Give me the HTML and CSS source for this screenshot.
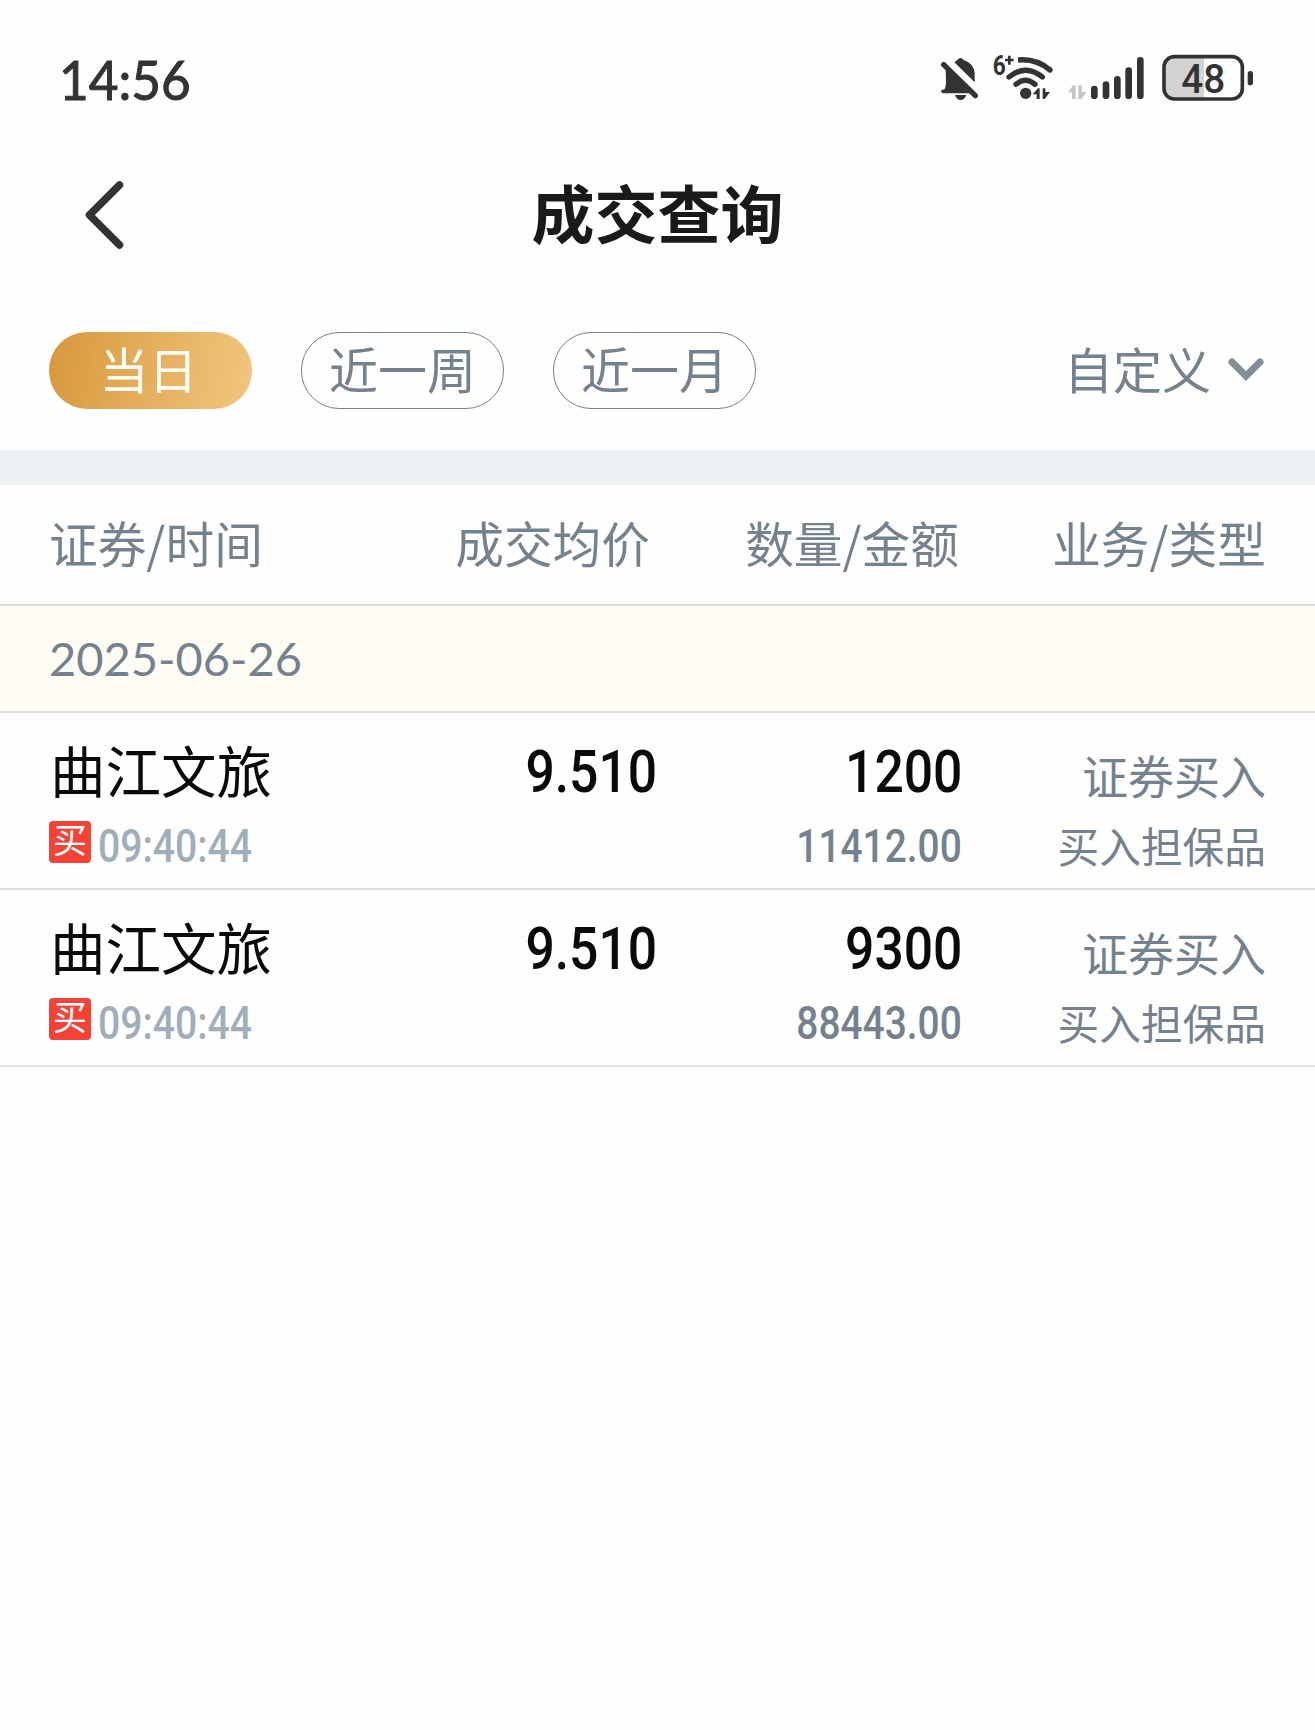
FILE: index.html
```html
<!DOCTYPE html>
<html lang="zh-CN">
<head>
  <meta charset="UTF-8">
  <title>成交查询</title>
  <link rel="stylesheet" href="styles.css">
</head>
<body>
  <div class="status-bar">
    <span class="clock">14:56</span>
    <svg class="status-icons" viewBox="0 0 1080 240" width="360" height="80">
      <!-- muted bell -->
      <g fill="#333">
        <path d="M77 78 L148 149 V154 H71 Q78 142 78 130 Z"/>
        <path d="M103 67 Q108 63 112 60 Q121 48 131 60 Q162 70 164 100 V127 Z"/>
        <path d="M105 165 H139 Q134 180 122 180 Q110 180 105 165 Z"/>
        <path d="M71 74 L166 167" fill="none" stroke="#333" stroke-width="16" stroke-linecap="round"/>
        <path d="M69 154 H150" fill="none" stroke="#333" stroke-width="11" stroke-linecap="round"/>
      </g>
      <!-- wifi -->
      <text class="wifi-gen" x="218" y="106" font-size="84" textLength="39" lengthAdjust="spacingAndGlyphs">6</text>
      <path d="M255 60 H281 M268 47 V74" fill="none" stroke="#333" stroke-width="8"/>
      <g fill="none" stroke="#333" stroke-width="16" stroke-linecap="round">
        <path d="M294 60 Q349 55 390 90" stroke-linecap="butt"/>
        <path d="M389 89 L390 90"/>
        <path d="M267 111 Q317 70 367 111"/>
        <path d="M288 133 Q316 109 345 133"/>
      </g>
      <circle cx="317" cy="160" r="17" fill="#333"/>
      <path d="M338 163 L354 145 H359 V177 H350 V163 Z M368 145 H376 V156 H390 L374 177 H368 Z" fill="#333"/>
      <!-- signal -->
      <path d="M445 157 L459 136 H467 V177 H456 V157 Z M475 136 H485 V157 H499 L484 177 H475 Z" fill="#c4c4c4"/>
      <path d="M523 147 V167 M558 134 V167 M592 118 V167 M626 92 V167 M661 61 V167" stroke="#333" stroke-width="20" stroke-linecap="round"/>
      <!-- battery -->
      <path d="M852 50 V177 H765 Q732 177 732 144 V83 Q732 50 765 50 Z" fill="#d3d3d3"/>
      <rect x="732" y="50" width="235" height="127" rx="31" fill="none" stroke="#333" stroke-width="11"/>
      <rect x="983" y="93" width="16" height="43" rx="8" fill="#333"/>
      <text class="battery-level" x="784" y="159" font-size="121" textLength="132" lengthAdjust="spacingAndGlyphs">48</text>
    </svg>
  </div>

  <div class="nav">
    <svg class="back" viewBox="0 0 40 70" width="40" height="70">
      <path d="M35.5 5 L5.5 35 L35.5 65" fill="none" stroke="#333" stroke-width="7.5" stroke-linecap="round" stroke-linejoin="round"/>
    </svg>
    <h1>成交查询</h1>
  </div>

  <div class="filters">
    <button class="pill active">当日</button>
    <button class="pill">近一周</button>
    <button class="pill">近一月</button>
    <div class="custom">
      <span>自定义</span>
      <svg viewBox="0 0 36 24" width="36" height="24">
        <path d="M4 5 L18 19 L32 5" fill="none" stroke="#828d9a" stroke-width="7" stroke-linecap="round" stroke-linejoin="miter"/>
      </svg>
    </div>
  </div>

  <div class="divider"></div>

  <div class="table-head">
    <span>证券/时间</span>
    <span>成交均价</span>
    <span>数量/金额</span>
    <span>业务/类型</span>
  </div>

  <div class="date"><span>2025-06-26</span></div>

  <div class="row">
    <div class="cell stock">
      <div class="name">曲江文旅</div>
      <div class="time"><i class="tag">买</i><span class="num">09:40:44</span></div>
    </div>
    <div class="cell price"><span class="num big">9.510</span></div>
    <div class="cell amount">
      <span class="num big">1200</span>
      <span class="num small">11412.00</span>
    </div>
    <div class="cell type">
      <div class="business">证券买入</div>
      <div class="kind">买入担保品</div>
    </div>
  </div>

  <div class="row">
    <div class="cell stock">
      <div class="name">曲江文旅</div>
      <div class="time"><i class="tag">买</i><span class="num">09:40:44</span></div>
    </div>
    <div class="cell price"><span class="num big">9.510</span></div>
    <div class="cell amount">
      <span class="num big">9300</span>
      <span class="num small">88443.00</span>
    </div>
    <div class="cell type">
      <div class="business">证券买入</div>
      <div class="kind">买入担保品</div>
    </div>
  </div>
</body>
</html>
```
FILE: styles.css
```css
* {
  box-sizing: border-box;
}
body {
  margin: 0;
  background-color: #fefefe;
  color: #74818f;
  font-family: "Noto Sans CJK SC", sans-serif;
}
.status-bar {
  display: flex;
  align-items: center;
  justify-content: space-between;
  height: 160px;
  padding: 0 35px 0 59px;
}
.clock {
  font-family: Lato, sans-serif;
  font-size: 54px;
  line-height: 60px;
  color: #333;
  -webkit-text-stroke: 1px #333;
  transform: scaleX(0.95);
  transform-origin: left;
}
.wifi-gen, .battery-level {
  font-family: Roboto, sans-serif;
  font-weight: 500;
  fill: #333;
}
.wifi-gen {
  font-weight: 700;
}
.nav {
  display: grid;
  grid-template-columns: 1fr auto 1fr;
  align-items: center;
  height: 106px;
  padding: 0 84px;
}
.back {
  margin-top: 3px;
}
h1 {
  margin: 0;
  padding-bottom: 4px;
  font-size: 63px;
  font-weight: 700;
  line-height: 90px;
  color: #1a1a1a;
}
.filters {
  display: flex;
  align-items: center;
  gap: 49px;
  height: 184px;
  padding: 25px 50px 0 49px;
}
.pill {
  width: 203px;
  height: 77px;
  padding: 0 0 5px;
  border: 1px solid #74818f;
  border-radius: 38px;
  background: none;
  font-family: inherit;
  font-size: 49px;
  line-height: 70px;
  color: #74818f;
}
.pill.active {
  padding-right: 4px;
  border: none;
  background: linear-gradient(100deg, #d8983b, #f1c67f);
  color: #fffdf5;
}
.custom {
  display: flex;
  align-items: center;
  gap: 17px;
  margin-left: auto;
  padding: 0 1px 5px 0;
  font-size: 49px;
  line-height: 70px;
}
.custom svg {
  margin-top: 2px;
}
.divider {
  height: 35px;
  background-color: #edf1f4;
}
.table-head, .row {
  display: grid;
  grid-template-columns: 1fr 300px 309px 307px;
  padding: 0 49px;
  border-bottom: 2px solid #dedede;
}
.table-head {
  height: 121px;
  font-size: 48.7px;
  line-height: 114px;
  text-align: right;
}
.table-head span:first-child {
  text-align: left;
}
.date {
  height: 107px;
  padding-left: 49px;
  border-bottom: 2px solid #dedede;
  background-color: #fffcf4;
  font-family: Lato, sans-serif;
  font-size: 47px;
  line-height: 105px;
}
.row {
  height: 177px;
}
.cell {
  display: flex;
  flex-direction: column;
  align-items: flex-end;
}
.stock {
  align-items: flex-start;
}
.name {
  padding: 16px 0 0 1px;
  font-size: 55.5px;
  line-height: 80px;
  color: #0a0a0a;
}
.time {
  display: flex;
  align-items: center;
  gap: 7px;
  height: 42px;
  margin-top: 12px;
}
.tag {
  width: 42px;
  height: 42px;
  border-radius: 4px;
  background-color: #f44336;
  color: #fff;
  font-size: 34px;
  font-style: normal;
  line-height: 36px;
  text-align: center;
}
.num {
  font-family: Roboto, sans-serif;
  font-weight: 500;
  transform: scaleX(0.86);
  transform-origin: right;
}
.time .num {
  padding-top: 8px;
  font-size: 46px;
  line-height: 46px;
  color: #a0aebb;
  transform: scaleX(0.85);
  transform-origin: left;
}
.big {
  padding-top: 19px;
  font-size: 60px;
  line-height: 80px;
  color: #0a0a0a;
}
.small {
  font-size: 46px;
  line-height: 68px;
  transform: scaleX(0.845);
}
.price {
  margin-right: -7px;
}
.amount {
  margin-right: -3px;
}
.business {
  padding-top: 26px;
  font-size: 46px;
  line-height: 70px;
}
.kind {
  font-size: 41.7px;
  line-height: 72px;
}
```
